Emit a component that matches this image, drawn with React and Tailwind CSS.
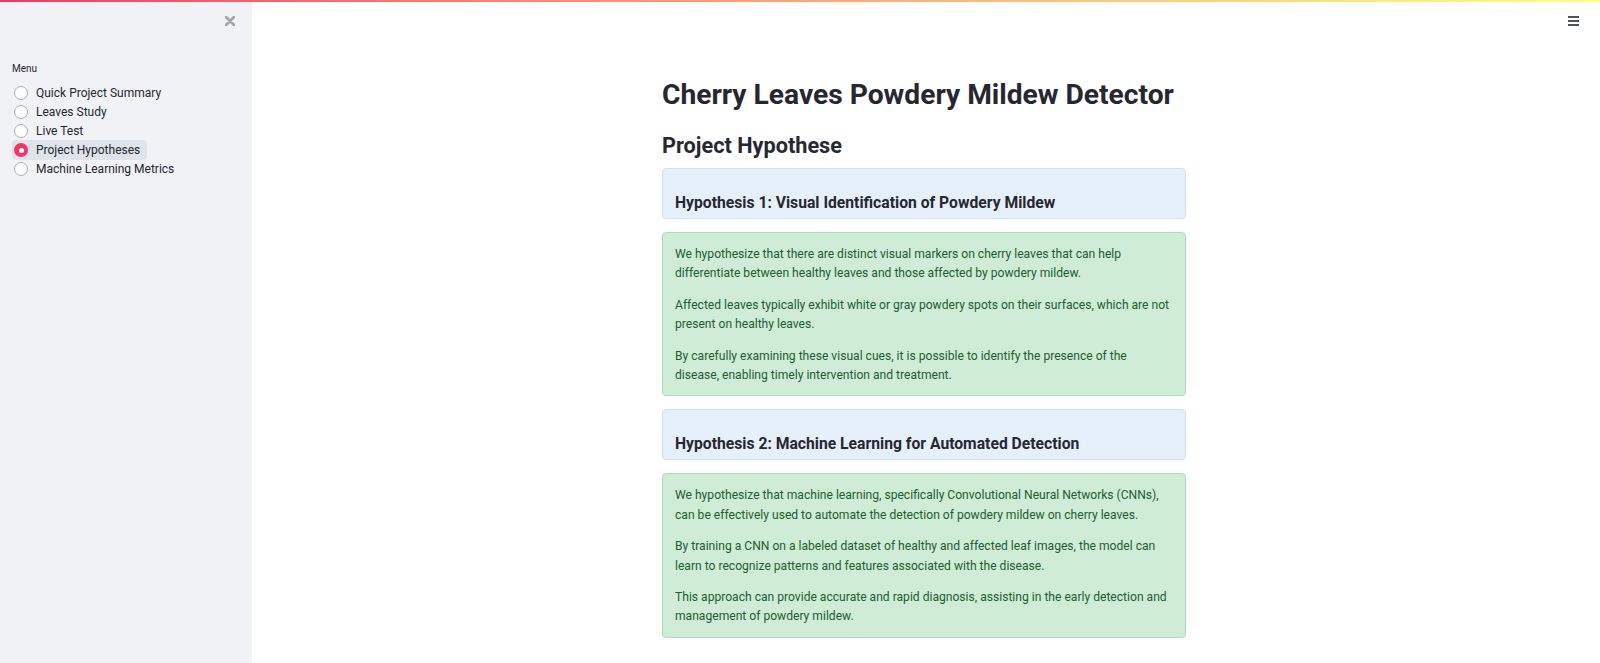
import React from "react";

const font = { fontFamily: "Roboto, 'Liberation Sans', sans-serif" };

function Radio({ label, selected }) {
  return (
    <div className="flex h-[19.2px] items-center">
      <div
        className={
          "flex h-[20px] items-center gap-[8px] rounded-[4px] pl-[2px] pr-[7px] " +
          (selected ? "bg-[#dfe3ea]" : "")
        }
      >
        {selected ? (
          <div className="flex h-[14px] w-[14px] items-center justify-center rounded-full bg-[#f63366]">
            <div className="h-[5px] w-[5px] rounded-full bg-white" />
          </div>
        ) : (
          <div className="h-[14px] w-[14px] rounded-full border-[1.5px] border-[#a9aeb8] bg-white" />
        )}
        <span className="text-[12px] leading-none text-[#262730]">{label}</span>
      </div>
    </div>
  );
}

function Info({ children }) {
  return (
    <div className="rounded-[4px] border border-[#d0e1f3] bg-[#e6f0fb] px-[12px] pb-[6px] pt-[25px]">
      <h3 className="text-[15.7px] font-bold leading-[18px] text-[#262730]">{children}</h3>
    </div>
  );
}

function Success({ paras }) {
  return (
    <div className="rounded-[4px] border border-[#b0dbbb] bg-[#cfecd6] px-[12px] pb-[10px] pt-[12px]">
      {paras.map((p, i) => (
        <p
          key={i}
          className={"text-[12.1px] leading-[19.4px] text-[#235c33] " + (i < paras.length - 1 ? "mb-[12px]" : "")}
        >
          {p.map((l, j) => (
            <React.Fragment key={j}>
              {l}
              {j < p.length - 1 && <br />}
            </React.Fragment>
          ))}
        </p>
      ))}
    </div>
  );
}

export default function App() {
  return (
    <div className="flex h-[663px] w-[1600px] flex-col overflow-hidden bg-white" style={font}>
      <div className="h-[2px] w-full bg-gradient-to-r from-[#f63366] to-[#fffd80]" />
      <div className="flex flex-1">
        <aside className="w-[252px] shrink-0 bg-[#f0f2f6] pl-[12px]">
          <div className="flex h-[37px] items-center justify-end pr-[17px]">
            <svg width="10" height="10" viewBox="0 0 10 10">
              <path d="M1 1 L9 9 M9 1 L1 9" stroke="#9ea3ae" strokeWidth="2.6" strokeLinecap="round" />
            </svg>
          </div>
          <div className="mt-[24px] text-[10px] leading-[12px] text-[#262730]">Menu</div>
          <div className="mt-[8px] flex flex-col">
            <Radio label="Quick Project Summary" />
            <Radio label="Leaves Study" />
            <Radio label="Live Test" />
            <Radio label="Project Hypotheses" selected />
            <Radio label="Machine Learning Metrics" />
          </div>
        </aside>
        <main className="relative flex flex-1 justify-center pr-[4px]">
          <div className="absolute right-[21px] top-[14px] flex w-[11px] flex-col gap-[2.2px]">
            <div className="h-[1.8px] bg-[#50535c]" />
            <div className="h-[1.8px] bg-[#50535c]" />
            <div className="h-[1.8px] bg-[#50535c]" />
          </div>
          <div className="w-[524px]">
            <h1 className="mt-[76px] text-[28.2px] font-bold leading-[34px] text-[#262730]">
              Cherry Leaves Powdery Mildew Detector
            </h1>
            <h2 className="mt-[21px] text-[21.7px] font-bold leading-[26px] text-[#262730]">Project Hypothese</h2>
            <div className="mt-[9px] flex flex-col gap-[13px]">
              <Info>Hypothesis 1: Visual Identification of Powdery Mildew</Info>
              <Success
                paras={[
                  [
                    "We hypothesize that there are distinct visual markers on cherry leaves that can help",
                    "differentiate between healthy leaves and those affected by powdery mildew.",
                  ],
                  [
                    "Affected leaves typically exhibit white or gray powdery spots on their surfaces, which are not",
                    "present on healthy leaves.",
                  ],
                  [
                    "By carefully examining these visual cues, it is possible to identify the presence of the",
                    "disease, enabling timely intervention and treatment.",
                  ],
                ]}
              />
              <Info>Hypothesis 2: Machine Learning for Automated Detection</Info>
              <Success
                paras={[
                  [
                    "We hypothesize that machine learning, specifically Convolutional Neural Networks (CNNs),",
                    "can be effectively used to automate the detection of powdery mildew on cherry leaves.",
                  ],
                  [
                    "By training a CNN on a labeled dataset of healthy and affected leaf images, the model can",
                    "learn to recognize patterns and features associated with the disease.",
                  ],
                  [
                    "This approach can provide accurate and rapid diagnosis, assisting in the early detection and",
                    "management of powdery mildew.",
                  ],
                ]}
              />
            </div>
          </div>
        </main>
      </div>
    </div>
  );
}
